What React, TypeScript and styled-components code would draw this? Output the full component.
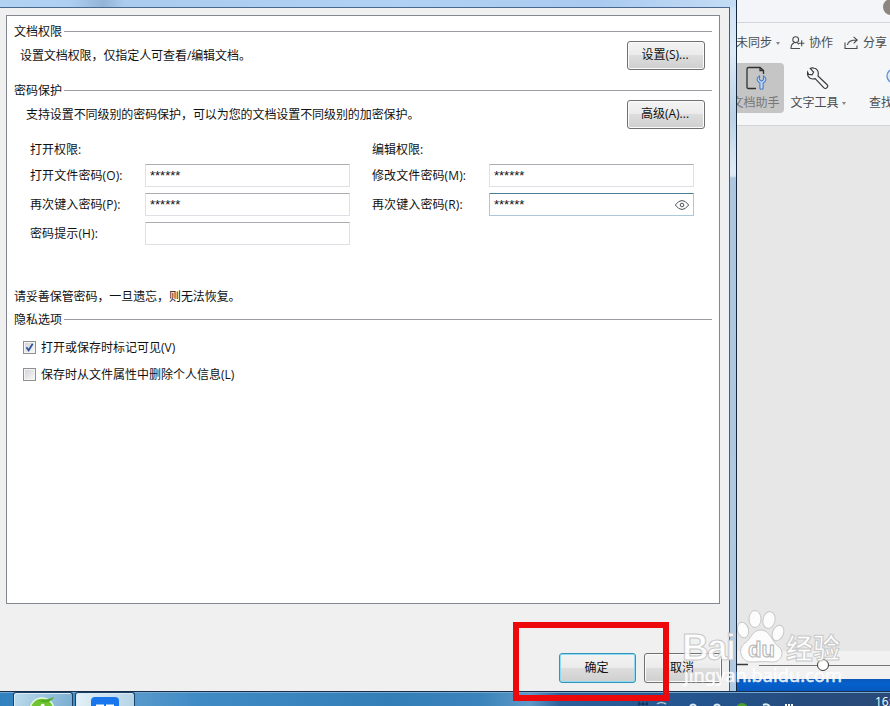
import React from "react";
import styled, { createGlobalStyle } from "styled-components";

const GlobalStyle = createGlobalStyle`
  * { box-sizing: border-box; }
  body { margin: 0; overflow: hidden; }
  button, input { font: inherit; color: inherit; }
`;

const Desktop = styled.div`
  position: relative;
  width: 890px;
  height: 706px;
  overflow: hidden;
  display: flex;
  flex-direction: column;
  font: 12px/16px "Open Sans", "Noto Sans CJK SC", sans-serif;
  color: #111;
`;

const Windows = styled.div`
  display: flex;
  height: 691px;
`;

const DialogFrame = styled.div`
  flex: none;
  width: 737px;
  padding: 7px 6px 0 0;
  border-right: 1px solid #15253a;
  background:
    linear-gradient(#cfe2f5, #dcebf8 45px, #b9d0e6 110px, #dfebf6 165px, #d8e6f3 169px, #adc6df 171px, #b0cae3) right 0 top 7px / 6px 100% no-repeat,
    linear-gradient(90deg, #b3d3f2, #adcff1 70px, #92b4d6 103px, #a9ccef 125px, #b0d1f2 400px, #aacbf0 600px, #c4dcf5);
`;

const Dialog = styled.div`
  height: 684px;
  padding: 7px 9px 0 6px;
  border-top: 1px solid #4a678d;
  border-right: 1px solid #3e5f8a;
  background: #f0f0f0;
`;

const Panel = styled.div`
  height: 589px;
  padding: 8px 7px 0;
  border: 1px solid #828790;
  background: #fff;
`;

const GroupTitle = styled.div`
  display: flex;
  align-items: center;
  gap: 2px;
  height: 16px;
  white-space: nowrap;
  &::after {
    content: "";
    flex: 1;
    height: 1px;
    margin-bottom: 2px;
    background: #9a9da2;
  }
`;

const DescriptionRow = styled.div<{ $indent: number }>`
  display: flex;
  justify-content: space-between;
  align-items: center;
  height: 28px;
  margin-top: 1px;
  padding: 0 7px 0 ${(p) => p.$indent}px;
`;

const Description = styled.span`
  padding-top: 1px;
  letter-spacing: -0.08px;
`;

const PasswordGroup = styled.div`
  margin-top: 14px;
`;

const Button = styled.button<{ $primary?: boolean; $height?: number }>`
  width: ${(p) => (p.$primary ? 77 : 78)}px;
  height: ${(p) => p.$height ?? 29}px;
  padding: 0 2px 0 0;
  border: 1px solid ${(p) => (p.$primary ? "#3494b8" : "#707070")};
  border-radius: 3px;
  box-shadow: inset 0 0 0 1px ${(p) => (p.$primary ? "#8edcf3" : "#fbfbfb")};
  background: linear-gradient(#f3f3f3, #ebebeb 49%, #dddddd 50%, #cfcfcf);
`;

const PasswordColumns = styled.div`
  display: grid;
  grid-template-columns: 342px 1fr;
  padding: 14px 0 0 16px;
`;

const PasswordColumn = styled.div<{ $labelWidth: number }>`
  display: grid;
  grid-template-columns: ${(p) => p.$labelWidth}px 205px;
  grid-template-rows: 16px;
  grid-auto-rows: 23px;
  align-content: start;
  align-items: center;
  row-gap: 6px;
`;

const ColumnTitle = styled.div`
  grid-column: 1 / -1;
`;

const FieldLabel = styled.span`
  letter-spacing: 0.1px;
`;

const Field = styled.div<{ $focused?: boolean }>`
  display: flex;
  align-items: center;
  justify-content: space-between;
  height: 23px;
  padding: 0 3px 0 4px;
  border: 1px solid ${(p) => (p.$focused ? "#a9c8d8" : "#dde0e5")};
  border-top-color: ${(p) => (p.$focused ? "#467f9a" : "#abadb3")};
  border-radius: 1px;
  background: #fff;
  font-family: "Liberation Sans", sans-serif;
  font-size: 13px;
`;

const Notice = styled.div`
  margin: 44px 0 7px;
  letter-spacing: -0.08px;
`;

const CheckRow = styled.div`
  display: flex;
  align-items: center;
  gap: 5px;
  height: 16px;
  margin: 11px 0 11px 9px;
`;

const CheckLabel = styled.span`
  padding-top: 1px;
`;

const CheckBox = styled.span`
  display: flex;
  width: 13px;
  height: 13px;
  padding: 1px;
  border: 1px solid #8e8f8f;
  background: linear-gradient(135deg, #d2d5da, #f6f6f6) content-box, #f4f4f4;
`;

const DialogFooter = styled.div`
  display: flex;
  justify-content: flex-end;
  gap: 8px;
  padding-top: 49px;
  margin-right: -2px;
`;

const AppWindow = styled.div`
  flex: 1;
  min-width: 0;
  display: flex;
  flex-direction: column;
  overflow: hidden;
  background: #e7e7e7;
  color: #4b4b4d;
  white-space: nowrap;
`;

const TitleStrip = styled.div`
  display: flex;
  flex: none;
  height: 23px;
  padding-left: 137px;
  border-bottom: 1px solid #d1d4d8;
  background: #f3f5f9;
`;

const TitleDivider = styled.span`
  width: 1px;
  height: 16px;
  margin-right: 9px;
  background: #cdd0d5;
`;

const Avatar = styled.span`
  flex: none;
  width: 16px;
  height: 16px;
  margin-top: -1px;
  border-radius: 50%;
  background: #8c8580;
`;

const Ribbon = styled.div`
  flex: none;
  height: 103px;
  border-bottom: 1px solid #d3d3d3;
  background: #f5f6f7;
`;

const ShareBar = styled.div`
  display: flex;
  align-items: center;
  height: 40px;
  margin-left: -1px;
`;

const ShareItem = styled.span<{ $width: number }>`
  display: flex;
  flex: none;
  align-items: center;
  gap: 4px;
  width: ${(p) => p.$width}px;
`;

const ToolBar = styled.div`
  display: flex;
  height: 60px;
  margin-left: -10px;
`;

const Tool = styled.div<{ $width: number; $active?: boolean }>`
  display: flex;
  flex: none;
  flex-direction: column;
  align-items: center;
  width: ${(p) => p.$width}px;
  height: 50px;
  padding-top: 3px;
  border-radius: 0 4px 4px 0;
  background: ${(p) => (p.$active ? "#c5c5c5" : "transparent")};
  color: ${(p) => (p.$active ? "#777" : "inherit")};
`;

const ToolIcon = styled.svg`
  flex: none;
  width: 26px;
  height: 26px;
  margin-bottom: 3px;
`;

const ToolLabel = styled.span`
  display: flex;
  align-items: center;
  gap: 3px;
`;

const ToolDivider = styled.span`
  width: 1px;
  height: 60px;
  margin: 0 9px 0 6px;
  background: #dfe0e2;
`;

const Caret = styled.span`
  width: 0;
  border: 2.5px solid transparent;
  border-top: 3px solid #858585;
  border-bottom: 0;
`;

const Canvas = styled.div`
  flex: 1;
`;

const StatusBar = styled.div`
  flex: none;
  height: 28px;
  background: #f1f1f1;
`;

const LowerEdge = styled.div`
  flex: none;
  height: 12px;
  background: linear-gradient(#0a57b5, #0560cc 4px, #0759c0);
`;

const Taskbar = styled.div`
  display: flex;
  align-items: flex-start;
  height: 15px;
  border-top: 1px solid #172f4c;
  box-shadow: inset 0 1px #76a7cf;
  padding-left: 13px;
  background: linear-gradient(90deg, #3181bf, #5598cb 140px, #3f8ac5 200px, #347eb8 390px, #3a83bb 480px, #5d99c6 530px, #2d609a 560px, #23548e 700px, #264c7e 800px, #294a78);
`;

const TaskButton = styled.div`
  display: flex;
  justify-content: center;
  width: 60px;
  height: 15px;
  margin-right: 2px;
  border: 1px solid #1d4166;
  border-bottom: 0;
  border-radius: 3px 3px 0 0;
  box-shadow: inset 1px 1px #d7eaf5;
  background: linear-gradient(110deg, #bddcec, #79add0);
  & + & { background: linear-gradient(100deg, #e4f1f8, #b5d3e6); }
`;

const Tray = styled.svg`
  width: 200px;
  height: 14px;
  margin-left: auto;
`;

const Clock = styled.span`
  width: 15px;
  margin-left: 39px;
  padding-top: 2px;
  color: #fff;
  overflow: hidden;
`;

const HighlightFrame = styled.div`
  position: absolute;
  left: 513px;
  top: 622px;
  width: 156px;
  height: 79px;
  border: 6px solid #ed080c;
`;

const Watermark = styled.svg`
  position: absolute;
  left: 675px;
  top: 605px;
`;

const EyeIcon = () => (
  <svg width="16" height="12" viewBox="0 0 16 12" fill="none" stroke="#4d5155">
    <path d="M1.3 6Q8-3 14.7 6Q8 15 1.3 6Z" />
    <circle cx="8" cy="6" r="1.8" />
  </svg>
);

const CheckMark = () => (
  <svg width="9" height="9" viewBox="0 0 9 9" fill="none" stroke="#32559b" strokeWidth="1.8">
    <path d="M1.4 4.3L3.6 7.3L7.7 .7" />
  </svg>
);

const CollaborateIcon = () => (
  <svg width="15" height="14" viewBox="0 0 15 14" fill="none" stroke="#4b4b4d" strokeWidth="1.1">
    <circle cx="5.7" cy="3.7" r="2.9" />
    <path d="M4 7.1Q1 8 1 12.5H10M7.5 7.3L9 8.2M11.7 4.3v6M8.8 7.3h5.6" />
  </svg>
);

const ShareIcon = () => (
  <svg width="15" height="14" viewBox="0 0 15 14" fill="none" stroke="#4b4b4d" strokeWidth="1.1">
    <path d="M1 6.5v6h12v-3M3.5 9Q4 4 12.8 4M9.6 .8L13.2 4L9.7 7.3" />
  </svg>
);

const DocumentToolIcon = () => (
  <ToolIcon viewBox="0 0 26 26" fill="none" stroke="#303030" strokeWidth="1.3">
    <path d="M13 22.5H5.5Q4 22.5 4 21V3Q4 1.5 5.5 1.5H17L20.5 4.5V8M17 1.5V4.5H20.5" />
    <path d="M16.5 10v3.8l2 1.2 2-1.2V10c3.6 2 2.8 5.6-.4 6.9v5.6q-1.6 1.4-3.2 0v-5.6c-3.2-1.3-4-4.9-.4-6.9z" fill="#c4d9f2" stroke="#4b7dc9" strokeWidth="1.1" />
  </ToolIcon>
);

const WrenchIcon = () => (
  <ToolIcon viewBox="0 0 26 26" fill="none" stroke="#38383a" strokeWidth="1.15">
    <path d="M9.2 2.3Q7 1.5 5.2 2.5L8.6 6.2L7.1 8.9L3.5 8.3L2.6 6.2Q2 10 4.8 12Q7.2 13.6 10.2 12.6L18.7 21.7Q20.4 23.3 22 21.7Q23.6 20.1 21.9 18.5L13 10Q14 5.6 11.6 3.4Q10.5 2.4 9.2 2.3Z" />
  </ToolIcon>
);

const SearchIcon = () => (
  <ToolIcon viewBox="0 0 26 26" fill="#dfeafb" stroke="#648fce" strokeWidth="1.3">
    <circle cx="14" cy="10" r="7" />
  </ToolIcon>
);

const ZoomSlider = () => (
  <svg width="153" height="28" fill="none" stroke="#37393b">
    <path d="M0 13.5h11" strokeWidth="1.5" />
    <path d="M22 14.5h131" stroke="#737577" />
    <circle cx="86" cy="14" r="5.5" fill="#fff" />
  </svg>
);

export default function App() {
  return (
    <>
      <GlobalStyle />
      <Desktop>
        <Windows>
          <DialogFrame>
            <Dialog>
              <Panel>
                <GroupTitle>文档权限</GroupTitle>
                <DescriptionRow $indent={6}>
                  <Description>设置文档权限，仅指定人可查看/编辑文档。</Description>
                  <Button>设置(S)...</Button>
                </DescriptionRow>
                <PasswordGroup>
                  <GroupTitle>密码保护</GroupTitle>
                  <DescriptionRow $indent={12}>
                    <Description>支持设置不同级别的密码保护，可以为您的文档设置不同级别的加密保护。</Description>
                    <Button>高级(A)...</Button>
                  </DescriptionRow>
                  <PasswordColumns>
                    <PasswordColumn $labelWidth={115}>
                      <ColumnTitle>打开权限:</ColumnTitle>
                      <FieldLabel>打开文件密码(O):</FieldLabel>
                      <Field>******</Field>
                      <FieldLabel>再次键入密码(P):</FieldLabel>
                      <Field>******</Field>
                      <FieldLabel>密码提示(H):</FieldLabel>
                      <Field />
                    </PasswordColumn>
                    <PasswordColumn $labelWidth={117}>
                      <ColumnTitle>编辑权限:</ColumnTitle>
                      <FieldLabel>修改文件密码(M):</FieldLabel>
                      <Field>******</Field>
                      <FieldLabel>再次键入密码(R):</FieldLabel>
                      <Field $focused>
                        ******
                        <EyeIcon />
                      </Field>
                    </PasswordColumn>
                  </PasswordColumns>
                </PasswordGroup>
                <Notice>请妥善保管密码，一旦遗忘，则无法恢复。</Notice>
                <GroupTitle>隐私选项</GroupTitle>
                <CheckRow>
                  <CheckBox><CheckMark /></CheckBox>
                  <CheckLabel>打开或保存时标记可见(V)</CheckLabel>
                </CheckRow>
                <CheckRow>
                  <CheckBox />
                  <CheckLabel>保存时从文件属性中删除个人信息(L)</CheckLabel>
                </CheckRow>
              </Panel>
              <DialogFooter>
                <Button $primary $height={30}>确定</Button>
                <Button $height={30}>取消</Button>
              </DialogFooter>
            </Dialog>
          </DialogFrame>
          <AppWindow>
            <TitleStrip>
              <TitleDivider />
              <Avatar />
            </TitleStrip>
            <Ribbon>
              <ShareBar>
                <ShareItem $width={54}>未同步<Caret /></ShareItem>
                <ShareItem $width={54}><CollaborateIcon />协作</ShareItem>
                <ShareItem $width={54}><ShareIcon />分享</ShareItem>
              </ShareBar>
              <ToolBar>
                <Tool $width={57} $active>
                  <DocumentToolIcon />
                  <ToolLabel>文档助手</ToolLabel>
                </Tool>
                <Tool $width={68}>
                  <WrenchIcon />
                  <ToolLabel>文字工具<Caret /></ToolLabel>
                </Tool>
                <ToolDivider />
                <Tool $width={52}>
                  <SearchIcon />
                  <ToolLabel>查找替换</ToolLabel>
                </Tool>
              </ToolBar>
            </Ribbon>
            <Canvas />
            <StatusBar><ZoomSlider /></StatusBar>
            <LowerEdge />
          </AppWindow>
        </Windows>
        <Taskbar>
          <TaskButton>
            <svg width="32" height="14" viewBox="0 0 32 14">
              <circle cx="15" cy="17" r="12" fill="#6fc431" stroke="#e9f8df" strokeWidth="1.5" />
              <path d="M11 7Q19 8 27 4Q23 11 15 9Z" fill="#55ac27" />
              <path d="M13 14q1-4 4-3l1 3" fill="#fff" />
            </svg>
          </TaskButton>
          <TaskButton>
            <svg width="28" height="14" viewBox="0 0 28 14">
              <rect y="4" width="28" height="18" rx="4" fill="#1976ed" />
              <path d="M5 12.5h8M15 12.5h8" stroke="#fff" strokeWidth="2" />
            </svg>
          </TaskButton>
          <Tray viewBox="0 0 200 14" fill="none">
            <path d="M2 12h10M3 9.5v4M7 9.5v4M11 9.5v4" stroke="#132b4c" />
            <path d="M21 12q4-3 9 0" stroke="#b4c3cf" strokeWidth="1.5" />
            <path d="M54 14q3-3 6 0M78 14q3-3 6 0" stroke="#d9e9f6" strokeWidth="2" />
            <circle cx="106" cy="17" r="6" fill="#4c9e2f" />
            <path d="M127 13q5-2 7 2" stroke="#dcedf3" strokeWidth="2" />
            <path d="M150 12v2M153 12v2M156 12v2" stroke="#fff" strokeWidth="2" />
          </Tray>
          <Clock>16:</Clock>
        </Taskbar>
        <HighlightFrame />
        <Watermark width="190" height="90" fill="#fff" stroke="#c4c4c4" opacity="0.88">
          <text x="7" y="55" fontFamily="Liberation Sans" fontSize="37" fontWeight="700" textLength="54">Bai</text>
          <g strokeWidth="1">
            <ellipse cx="68" cy="25" rx="5.5" ry="8" transform="rotate(-15 68 25)" />
            <ellipse cx="80" cy="14" rx="6" ry="8.5" />
            <ellipse cx="94" cy="15" rx="6" ry="8.5" transform="rotate(12 94 15)" />
            <ellipse cx="103" cy="28" rx="5.5" ry="8" transform="rotate(22 103 28)" />
            <path d="M86 25C77 25 77 33 70 38C62 44 66 56 75 57C83 57 89 56 97 57C108 57 109 46 104 42C97 37 95 25 86 25Z" />
          </g>
          <text x="73" y="52" fontFamily="Liberation Sans" fontSize="22" fontWeight="700" stroke="#aaa">du</text>
          <text x="111" y="54" fontFamily="Noto Sans CJK SC" fontSize="28" fontWeight="700" textLength="54" lengthAdjust="spacingAndGlyphs">经验</text>
          <text x="9" y="77" fontFamily="Noto Sans" fontSize="18" textLength="158" lengthAdjust="spacingAndGlyphs" stroke="#fff" strokeWidth="0.5">jingyan.baidu.com</text>
        </Watermark>
      </Desktop>
    </>
  );
}
